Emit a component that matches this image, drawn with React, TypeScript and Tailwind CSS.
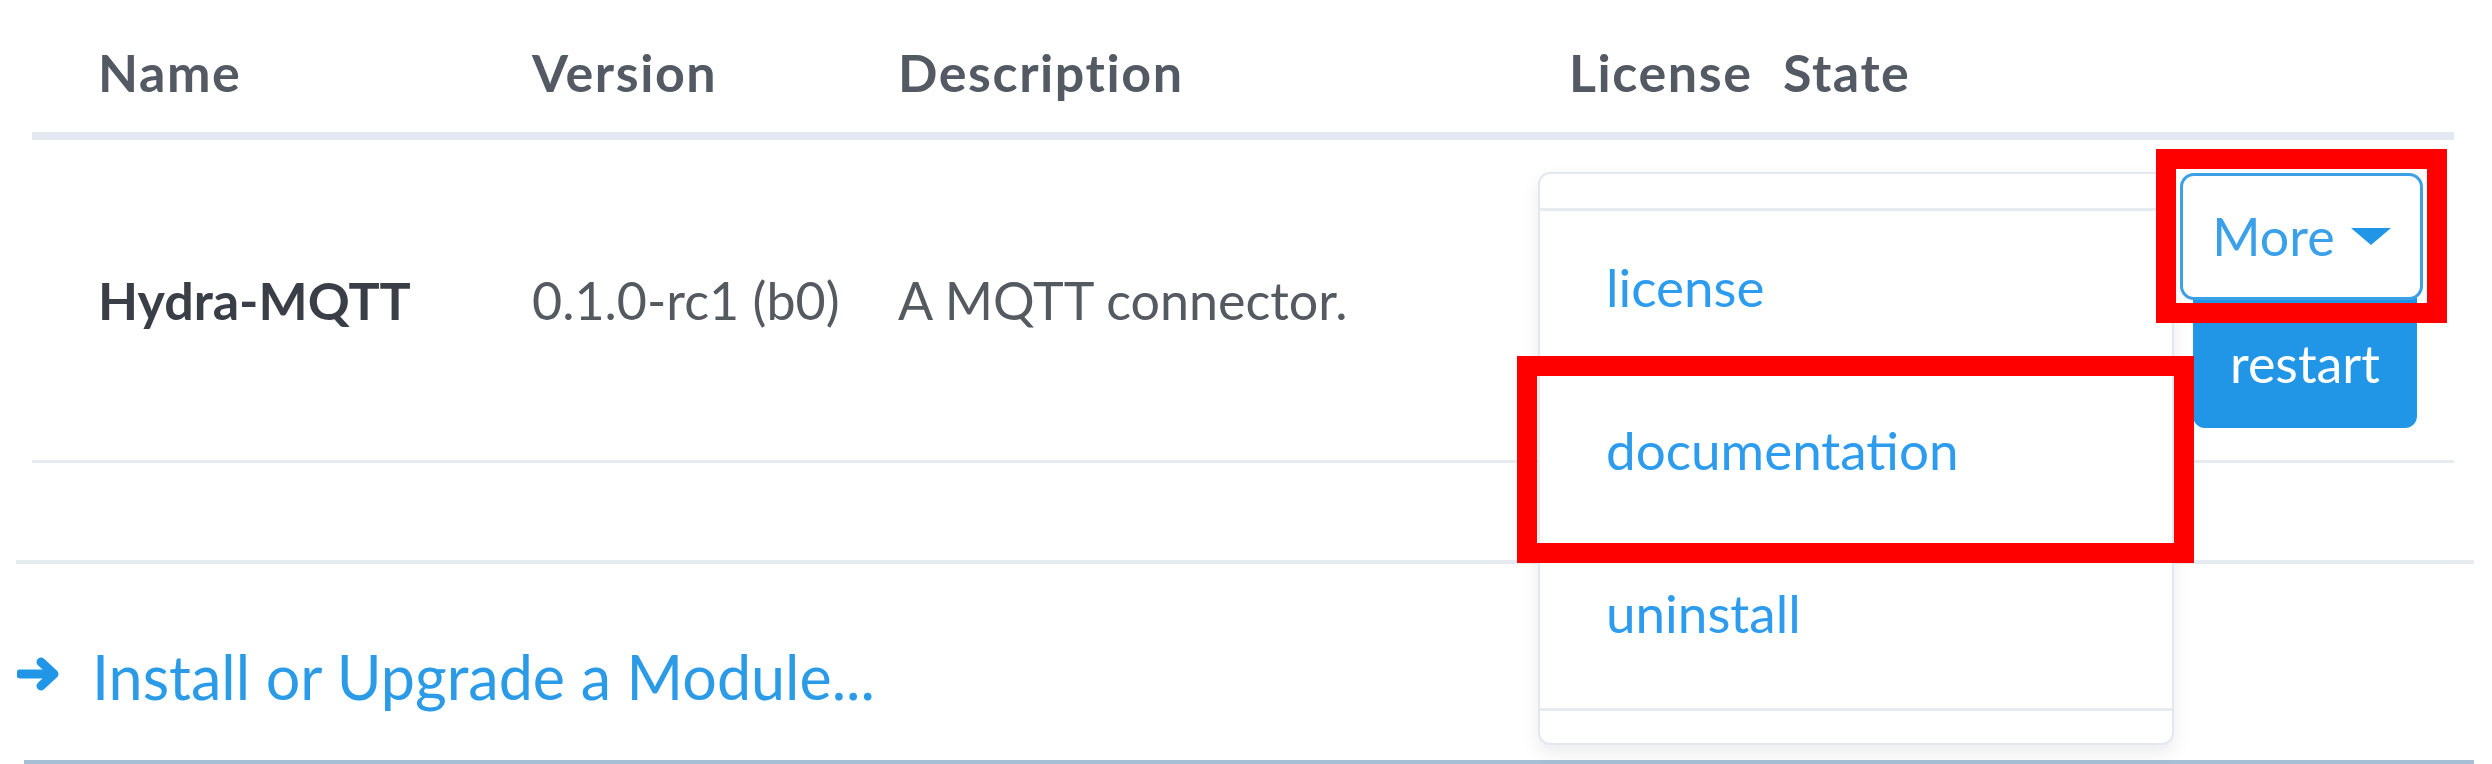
import React from 'react';

const columns = ['Name', 'Version', 'Description', 'License', 'State'];

const menuItems = ['license', 'documentation', 'uninstall'];

function ArrowIcon() {
  return (
    <svg width="43" height="34" viewBox="0 0 43 34" className="mt-[11px] shrink-0">
      <path d="M3 17 H36" stroke="#2196e6" strokeWidth="9" strokeLinecap="round" fill="none" />
      <path d="M24 5 L37 17 L24 29" stroke="#2196e6" strokeWidth="9" strokeLinecap="round" strokeLinejoin="round" fill="none" />
    </svg>
  );
}

export default function App() {
  return (
    <div className="relative w-[2492px] h-[764px] overflow-hidden bg-white font-['Lato',sans-serif]">
      {/* Table */}
      <div className="ml-[32px] w-[2422px]">
        <div className="grid grid-cols-[500px_366px_671px_214px_1fr] h-[140px] pt-[46px] border-b-[8px] border-[#e3e9f0] text-[52px] leading-none font-bold tracking-[0.03em] text-[#545a63]">
          {columns.map((c, i) => (
            <div key={c} className={i === 0 ? 'pl-[66px]' : ''}>
              {c}
            </div>
          ))}
        </div>

        <div className="grid grid-cols-[500px_366px_671px_214px_1fr] items-center h-[323px] border-b-[3px] border-[#e6ebf1] text-[52px] leading-none text-[#555a61]">
          <div className="pl-[66px] font-bold text-[#3a3f47]">Hydra-MQTT</div>
          <div>0.1.0-rc1 (b0)</div>
          <div>A MQTT connector.</div>
          <div />
          <div className="flex flex-col items-end pr-[31px]">
            <button className="relative z-10 flex items-center justify-center gap-[16px] w-[243px] h-[127px] rounded-[14px] border-[3px] border-[#3d9fe6] bg-white text-[#3ba0ea]">
              <span>More</span>
              <svg width="40" height="17" viewBox="0 0 40 17">
                <path d="M0 0 H40 L20 17 Z" fill="#2196e6" />
              </svg>
            </button>
            <button className="mt-[-2px] mr-[6px] w-[224px] h-[130px] rounded-b-[12px] bg-[#2196e6] text-white">
              restart
            </button>
          </div>
        </div>
      </div>

      {/* Spacer row */}
      <div className="h-[97px]" />
      <div className="ml-[16px] w-[2458px] border-b-[4px] border-[#e6ebf1]" />

      {/* Install link */}
      <div className="flex items-start gap-[32px] h-[196px] pt-[82px] pl-[17px] text-[61px] leading-none text-[#2b9be8]">
        <ArrowIcon />
        <span>Install or Upgrade a Module...</span>
      </div>
      <div className="ml-[24px] mr-[18px] h-[4px] bg-[#a7bfd4]" />

      {/* Dropdown menu */}
      <div className="absolute left-[1538px] top-[172px] w-[636px] h-[573px] rounded-[12px] border-[2px] border-[#e3e8ee] bg-white shadow-[0_8px_18px_rgba(0,0,0,0.08)] flex flex-col">
        <div className="h-[37px] border-b-[3px] border-[#e6ebf1]" />
        <div className="pb-[8px]">
          {menuItems.map((item) => (
            <div key={item} className="flex items-center h-[163px] pb-[12px] pl-[66px] text-[53px] leading-none text-[#2d9cef]">
              {item}
            </div>
          ))}
        </div>
        <div className="h-[3px] bg-[#e6ebf1]" />
      </div>

      {/* Annotation boxes */}
      <div className="absolute left-[2156px] top-[149px] w-[291px] h-[174px] border-[20px] border-[#ff0000] z-20" />
      <div className="absolute left-[1517px] top-[356px] w-[677px] h-[207px] border-[20px] border-[#ff0000] z-20" />
    </div>
  );
}
